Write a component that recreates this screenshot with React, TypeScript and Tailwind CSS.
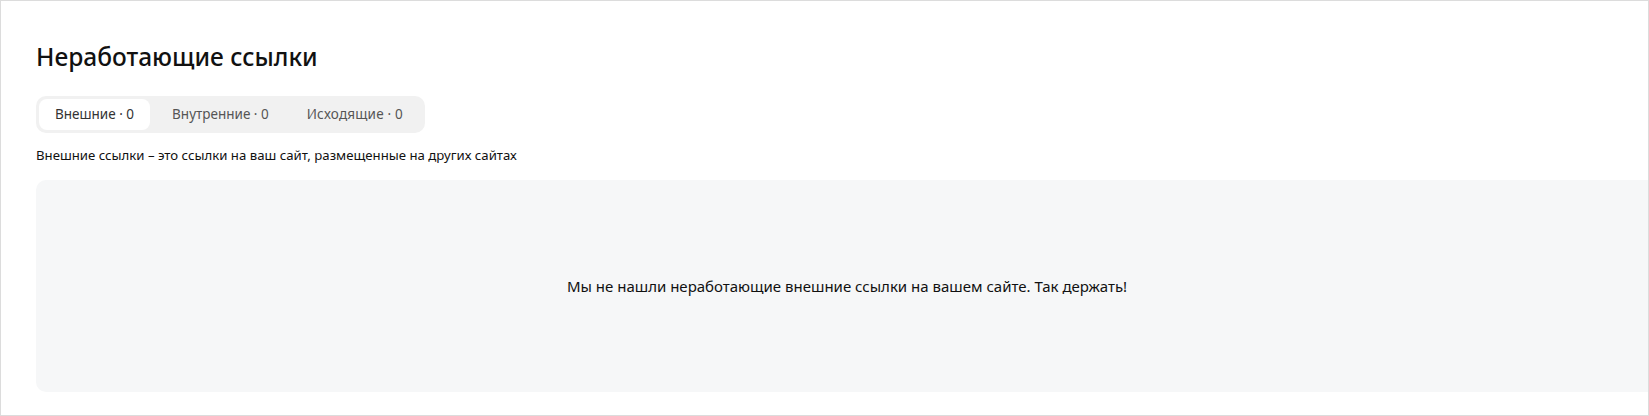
import React, { useState } from 'react';

const tabs = [
  { id: 'external', label: 'Внешние', count: 0 },
  { id: 'internal', label: 'Внутренние', count: 0 },
  { id: 'outgoing', label: 'Исходящие', count: 0 },
];

function App() {
  const [active, setActive] = useState('external');

  return (
    <div
      className="h-[416px] w-full overflow-hidden border border-[#dcdcdc] bg-white text-[#222]"
      style={{ fontFamily: '"Noto Sans", "Open Sans", Arial, sans-serif' }}
    >
      <div className="flex flex-col pl-[35px] pt-[40px]">
        {/* Title */}
        <h1 className="text-[24.5px] font-medium leading-[32px] text-[#111]">Неработающие ссылки</h1>

        {/* Tabs */}
        <div className="mt-[23px] flex self-start gap-[6px] rounded-[10px] bg-[#f1f1f1] p-[3px]">
          {tabs.map((tab) => (
            <button
              key={tab.id}
              onClick={() => setActive(tab.id)}
              className={`h-[31px] rounded-[8px] px-[16px] text-[13.5px] leading-[31px] ${
                active === tab.id ? 'bg-white text-[#333]' : 'text-[#555]'
              } ${tab.id === 'outgoing' ? 'pr-[19px] tracking-[0.2px]' : ''}`}
            >
              {tab.label} · {tab.count}
            </button>
          ))}
        </div>

        {/* Description */}
        <p className="mt-[13px] text-[13.2px] leading-[18px] text-[#111]">
          Внешние ссылки – это ссылки на ваш сайт, размещенные на других сайтах
        </p>

        {/* Empty state */}
        <div className="-mr-[10px] mt-[16px] flex h-[212px] items-center justify-center rounded-[10px] bg-[#f6f7f8]">
          <span className="text-[15px] text-[#111]">
            Мы не нашли неработающие внешние ссылки на вашем сайте. Так держать!
          </span>
        </div>
      </div>
    </div>
  );
}

export default App;
